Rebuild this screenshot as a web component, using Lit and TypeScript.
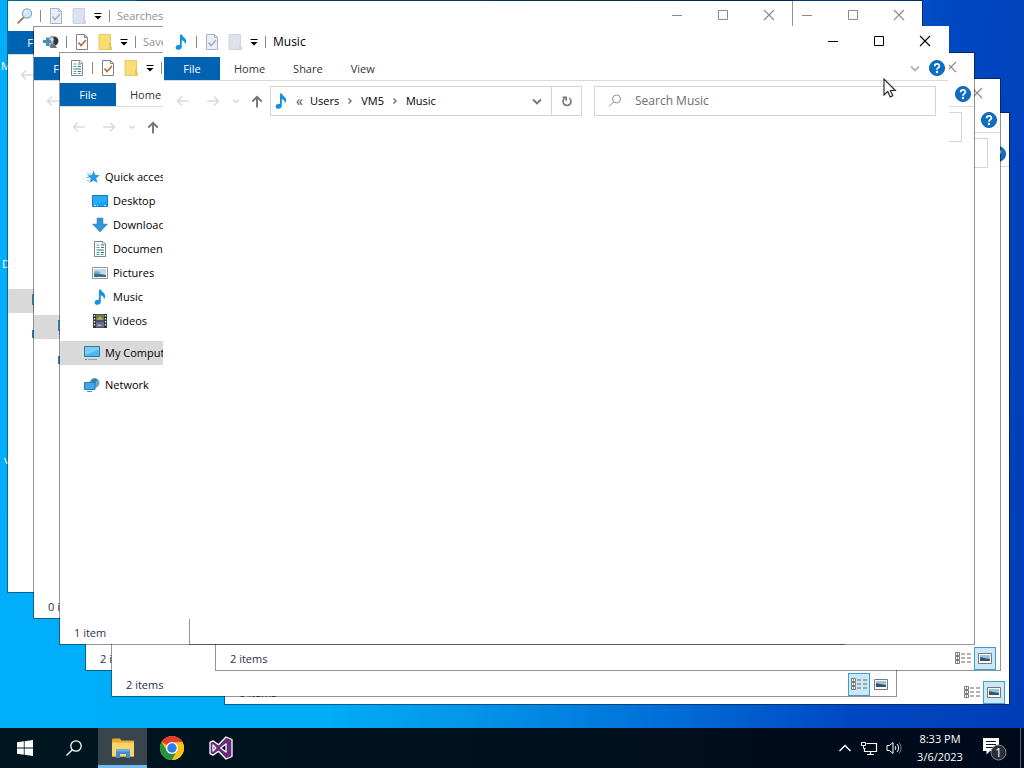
import { LitElement, html, svg, css, nothing } from "lit";
import { customElement, property } from "lit/decorators.js";
import { classMap } from "lit/directives/class-map.js";
import { styleMap } from "lit/directives/style-map.js";

interface WindowSpec {
  x: number;
  y: number;
  title?: string;
  icon: string;
  active?: boolean;
  muted?: boolean;
  tabs?: string[];
  nav?: "labels" | "icons";
  status?: string;
  view?: "details" | "large";
}

const art: Record<string, unknown> = {
  note: svg`<path d="M7 .5h1.800c.4 2.400 4.400 3.300 4.400 6.600 0 1.400-.6 2.600-1.400 3.400.4-2.600-.9-3.700-3-4.300v6.600c0 1.700-1.500 3-3.400 3-1.700 0-2.800-.9-2.800-2.300 0-1.600 1.500-2.800 3.300-2.800.4 0 .8 0 1.100.2z" fill="#1492dc"/>`,
  magnifier: svg`<path d="M7 9 1.200 14.800" stroke="#a08468" stroke-width="2" stroke-linecap="round"/><circle cx="10" cy="5.500" r="4.600" fill="#cfe9f8" stroke="#8fa9b8" stroke-width="1.200"/><path d="M7.500 5a2.600 2.600 0 0 1 2.500-2.400" stroke="#fff" fill="none"/>`,
  games: svg`<circle cx="11" cy="7" r="4.500" fill="#2f363c"/><path d="M6 3.500c2-2.500 4.500-2 4.500-2V13H6z" fill="#a7b0b7"/><path d="M0 6h3V3.500h3V6h2v3H6v3H3V9H0z" fill="#4c8dbd"/><path d="M8 10h4l2 4H7z" fill="#68747e"/><circle cx="9" cy="5.500" r="1.500" fill="#dfe6ea"/>`,
  document: svg`<path d="M2.500.5h8.500l2.500 2.500v12.500h-11z" fill="#fff" stroke="#7b8790"/><path d="M4.500 4h3m-3 2.500h3m-3 5h3m1.500 2h2.500m-7 0h3" stroke="#4c9fae"/><path d="M9 4h3M9 6.500h3M4.500 9H12M9 11.500h3" stroke="#3a6f93"/><path d="M10.500.5v3h3" fill="none" stroke="#9aa4ab"/>`,
  star: svg`<path d="m9.500 1.500 1.700 4.300 4.500.4-3.500 3 1.300 4.800-4-2.500-4 2.500 1.300-4.600-3.300-3 4.400-.5z" fill="#2d9be0"/><path d="M2.500 8.500h3M3 11.500h2.500M3 5h4" stroke="#6dbcf0"/>`,
  desktop: svg`<path d="M.5 2.500h15v11H.5z" fill="#18a0f5" stroke="#1579bd"/><path d="M2 12.500h2m1 0h1m6 0h2" stroke="#c7ebff"/><path d="M1 3h14v5L1 12z" fill="#35b3ff" opacity=".6"/>`,
  download: svg`<path d="M5 1h6v6h4.500L8 15 .5 7H5z" fill="#3394d8" stroke="#2b7fbc" stroke-width=".5"/>`,
  picture: svg`<path d="M.5 2.500h15v11H.5z" fill="#fff" stroke="#8b969e"/><path d="M2 4h12v8H2z" fill="#c0dbed"/><path d="m2 7 4 1.500L14 10v2H2z" fill="#406d8b"/><path d="M2 6.500 6 6l3 2-7 1z" fill="#7fa8c2"/>`,
  video: svg`<path d="M1 1h14v14H1z" fill="#303436"/><path d="M4 1.500h8v6H4z" fill="#6d7f50"/><path d="M4 8.500h8v6H4z" fill="#6066a8"/><path d="M5 6.500l3-3 3 3zM5 13l2-2 4 2z" fill="#c9bb52"/><path d="M2.500 2v12M13.500 2v12" stroke="#e6e6e6" stroke-width="1.400" stroke-dasharray="1.500 1.500"/>`,
  computer: svg`<path d="M.5 1.500h15v10H.5z" fill="#4cb6f1" stroke="#31789f"/><path d="M1 2h14v3L1 10z" fill="#8ad4fa" opacity=".7"/><path d="M4 14.500h9" stroke="#8aa3b1"/><path d="M1 14.500h2" stroke="#6c7e89"/>`,
  network: svg`<circle cx="10.500" cy="6" r="5" fill="#6fa9c6"/><path d="M7.500 3.500c2-2.500 5-2 6 0l-2 1.500-1 3-2-2z" fill="#417c99"/><path d="M.5 5.500h10.500v7H.5z" fill="#3fa9ea" stroke="#2679ac"/><path d="M3 14.500h5" stroke="#5791b3"/>`,
  back: svg`<path d="M14 8H3m4-4.500L2.500 8 7 12.500" fill="none" stroke="currentColor" stroke-width="1.400"/>`,
  forward: svg`<path d="M2 8h11M9 3.500 13.500 8 9 12.500" fill="none" stroke="currentColor" stroke-width="1.400"/>`,
  up: svg`<path d="M8 14.500V4M3.300 8.500 8 3.800l4.700 4.700" fill="none" stroke="currentColor" stroke-width="1.900"/>`,
  down: svg`<path d="m4 6.500 4 4 4-4" fill="none" stroke="currentColor" stroke-width="1.800"/>`,
  smalldown: svg`<path d="m5.500 7 2.500 2.500L10.500 7" fill="none" stroke="currentColor" stroke-width="1.200"/>`,
  right: svg`<path d="m6.500 5.500 2.500 2.500-2.500 2.500" fill="none" stroke="currentColor" stroke-width="1.500"/>`,
  refresh: svg`<path d="M10.300 5.200a4 4 0 1 1-4.600 0" fill="none" stroke="currentColor" stroke-width="1.600"/><path d="M3.500 4.200h3.700v3.600" fill="none" stroke="currentColor" stroke-width="1.600"/>`,
  find: svg`<circle cx="9.500" cy="6" r="4" fill="none" stroke="currentColor"/><path d="M6.500 9 2 13.500" stroke="currentColor"/>`,
  minimize: svg`<path d="M3 8.500h10" stroke="currentColor"/>`,
  maximize: svg`<path d="M3.500 3.500h9v9h-9z" fill="none" stroke="currentColor"/>`,
  close: svg`<path d="m3 3 10 10M13 3 3 13" fill="none" stroke="currentColor" stroke-width="1.100"/>`,
  help: svg`<circle cx="8" cy="8" r="7.600" fill="#0b6fc4" stroke="#0a4f93" stroke-width=".8"/><path d="M5.700 6.200c0-3 4.700-3 4.700-.3C10.400 7.700 8 7.600 8 9.700" fill="none" stroke="#fff" stroke-width="1.800"/><circle cx="8" cy="12" r="1.200" fill="#fff"/>`,
  details: svg`<path d="M.5 2.500h4v3h-4zm0 4h4v3h-4zm0 4h4v3h-4z" fill="#fff" stroke="#777"/><path d="M2 4h1M2 8h1M2 12h1" stroke="#333"/><path d="M6 4h4m2 0h4M6 8h4m2 0h4M6 12h4m2 0h4" stroke="#666"/>`,
  large: svg`<path d="M1.500 3.500h13v10h-13z" fill="#fff" stroke="#777"/><path d="M3 5h10v6H3z" fill="#9cc3dc"/><path d="m3 7 4 1 6 1v2H3z" fill="#2d5672"/>`,
  quickdown: svg`<path d="M4.500 5.500h7" stroke="currentColor" stroke-width="1"/><path d="M4.500 8h7L8 11.500z" fill="currentColor"/>`,
};

const icon = (name: string) =>
  html`<svg class="icon" viewBox="0 0 16 16" width="16" height="16" aria-hidden="true">${art[name]}</svg>`;

const checkPage = (muted: boolean) => html`<svg class="icon" viewBox="0 0 16 16" width="16" height="16" aria-hidden="true">
  <path d="M2.500.5h8l3 3v12h-11z" fill=${muted ? "#e9eef8" : "#fff"} stroke=${muted ? "#aab3c2" : "#85817f"} />
  <path d="M10.500.5v3h3" fill="none" stroke=${muted ? "#aab3c2" : "#85817f"} />
  <path d="m4.500 8.500 2.500 3 5-5.500" fill="none" stroke=${muted ? "#a3b0c6" : "#c0642f"} stroke-width="1.600" />
</svg>`;

const folder = (muted: boolean) => html`<svg class="icon" viewBox="0 0 16 16" width="16" height="16" aria-hidden="true">
  <path d="M2 .5h11.500v11l1 2v2H2z" fill=${muted ? "#dde2ef" : "#f9dc74"} stroke=${muted ? "#cdd3e2" : "#ecc95c"} />
  <path d="M13 9v6.500" stroke=${muted ? "#c3cada" : "#dcae3e"} />
</svg>`;

const shared = css`
  :host {
    box-sizing: border-box;
    font-family: "Open Sans", "Noto Sans", sans-serif;
    font-size: 11px;
    line-height: 16px;
  }
  * {
    box-sizing: border-box;
  }
  button {
    display: flex;
    align-items: center;
    justify-content: center;
    margin: 0;
    padding: 0;
    border: 0;
    background: none;
    color: inherit;
    font: inherit;
  }
  .icon {
    display: block;
    flex: none;
  }
`;

@customElement("explorer-window")
export class ExplorerWindow extends LitElement {
  @property({ attribute: false }) spec!: WindowSpec;

  static styles = [
    shared,
    css`
      :host {
        display: flex;
        flex-direction: column;
        background: #fff;
        background-clip: padding-box;
        color: #1b1b1b;
        overflow: hidden;
      }
      .title {
        display: flex;
        align-items: center;
        height: 30px;
        gap: 7px;
        padding-left: 9px;
      }
      .rule {
        width: 1px;
        height: 12px;
        background: #8b8b8b;
      }
      .quick {
        width: 8px;
        height: 16px;
        color: #000;
      }
      .quick .icon {
        margin: 0 -4px;
      }
      .name {
        flex: 1;
        font-size: 11px;
        font-weight: 400;
        margin: 0;
        color: #909090;
        white-space: nowrap;
      }
      .controls {
        display: flex;
        align-self: flex-start;
        color: #8a8a8a;
      }
      .controls button {
        width: 46px;
        height: 28px;
      }
      .active .name {
        font-size: 12px;
      }
      .active .name,
      .active .controls {
        color: #000;
      }
      .tabs {
        display: flex;
        align-items: flex-start;
        height: 24px;
        border-bottom: 1px solid #dadada;
        padding-right: 3px;
      }
      .tab {
        padding: 0 14px;
        height: 23px;
        color: #333;
      }
      .file {
        width: 56px;
        background: #0063b1;
        color: #fff;
      }
      .spacer {
        flex: 1;
      }
      .expand {
        height: 22px;
        color: #b4b4b4;
        margin-right: 6px;
      }
      .help {
        height: 22px;
      }
      .toolbar {
        display: flex;
        align-items: center;
        padding: 5px 12px 7px 4px;
      }
      .step {
        width: 30px;
        color: #dadada;
      }
      .recent {
        width: 16px;
        color: #d0d0d0;
      }
      .up {
        width: 26px;
        color: #757575;
      }
      .address {
        display: flex;
        align-items: center;
        flex: 1;
        height: 30px;
        border: 1px solid #d4d4d4;
        padding-left: 2px;
        color: #777;
      }
      .crumb {
        color: #000;
      }
      .more {
        width: 21px;
        height: 16px;
        font-size: 14px;
        color: #555;
      }
      .chevron {
        display: flex;
        justify-content: center;
        width: 22px;
      }
      .drop {
        width: 28px;
        height: 28px;
      }
      .refresh {
        width: 30px;
        height: 28px;
        border-left: 1px solid #d4d4d4;
      }
      .search {
        display: flex;
        align-items: center;
        width: 342px;
        height: 30px;
        margin-left: 12px;
        border: 1px solid #d4d4d4;
        padding-left: 12px;
        gap: 12px;
        color: #8c8c8c;
      }
      .search input {
        flex: 1;
        min-width: 0;
        border: 0;
        padding: 0;
        outline: 0;
        background: none;
        font: inherit;
        font-size: 12px;
        color: #000;
      }
      .search input::placeholder {
        color: #6d6d6d;
        opacity: 1;
      }
      .body {
        flex: 1;
      }
      .nav {
        width: 190px;
        margin: 0;
        padding: 16px 0 0;
        list-style: none;
      }
      .item {
        display: flex;
        align-items: center;
        height: 24px;
        padding-left: 24px;
        gap: 5px;
        white-space: nowrap;
        color: #000;
      }
      .child {
        padding-left: 32px;
      }
      .apart {
        margin-top: 8px;
      }
      .selected {
        background: #d9d9d9;
      }
      .status {
        display: flex;
        align-items: center;
        height: 24px;
        padding: 0 4px 0 14px;
        color: #26324d;
      }
      .count {
        padding-top: 2px;
      }
      .view {
        width: 22px;
        height: 23px;
        border: 1px solid transparent;
      }
      .view.on {
        background: #cce8f6;
        border-color: #3ba1c9;
      }
    `,
  ];

  private item(label: string, glyph: string, mods: Record<string, boolean> = {}) {
    const text = this.spec.nav === "labels" ? html`<span>${label}</span>` : nothing;
    return html`<li class=${classMap({ item: true, ...mods })}>${icon(glyph)}${text}</li>`;
  }

  render() {
    const s = this.spec;
    const muted = !!s.muted;
    return html`
      <header class=${classMap({ title: true, active: !!s.active })}>
        ${icon(s.icon)}<span class="rule"></span>${checkPage(muted)}${folder(muted)}
        <button class="quick" aria-label="Customize Quick Access Toolbar">${icon("quickdown")}</button>
        <span class="rule"></span>
        <h2 class="name">${s.title ?? ""}</h2>
        <div class="controls">
          <button aria-label="Minimize">${icon("minimize")}</button>
          <button aria-label="Maximize">${icon("maximize")}</button>
          <button aria-label="Close">${icon("close")}</button>
        </div>
      </header>
      <div class="tabs">
        ${(s.tabs ?? []).map(
          (name, i) => html`<button class=${classMap({ tab: true, file: i === 0 })}>${name}</button>`,
        )}
        <span class="spacer"></span>
        <button class="expand" aria-label="Expand the ribbon">${icon("down")}</button>
        <button class="help" aria-label="Help">${icon("help")}</button>
      </div>
      <div class="toolbar">
        <button class="step" aria-label="Back">${icon("back")}</button>
        <button class="step" aria-label="Forward">${icon("forward")}</button>
        <button class="recent" aria-label="Recent locations">${icon("smalldown")}</button>
        <button class="up" aria-label="Up">${icon("up")}</button>
        <div class="address">
          ${s.active
            ? html`${icon(s.icon)}
                <button class="more" aria-label="Earlier folders">«</button>
                <button class="crumb">Users</button>
                <span class="chevron">${icon("right")}</span>
                <button class="crumb">VM5</button>
                <span class="chevron">${icon("right")}</span>
                <button class="crumb">Music</button>`
            : nothing}
          <span class="spacer"></span>
          <button class="drop" aria-label="Previous locations">${icon("down")}</button>
          <button class="refresh" aria-label="Refresh">${icon("refresh")}</button>
        </div>
        <label class="search">
          ${icon("find")}
          <input type="text" aria-label="Search" placeholder=${s.active ? `Search ${s.title}` : ""} />
        </label>
      </div>
      <div class="body">
        ${s.nav
          ? html`<ul class="nav">
              ${this.item("Quick access", "star")}
              ${this.item("Desktop", "desktop", { child: true })}
              ${this.item("Downloads", "download", { child: true })}
              ${this.item("Documents", "document", { child: true })}
              ${this.item("Pictures", "picture", { child: true })}
              ${this.item("Music", "note", { child: true })}
              ${this.item("Videos", "video", { child: true })}
              ${this.item("My Computer", "computer", { apart: true, selected: true })}
              ${this.item("Network", "network", { apart: true })}
            </ul>`
          : nothing}
      </div>
      ${s.status
        ? html`<footer class="status">
            <span class="count">${s.status}</span>
            <span class="spacer"></span>
            ${s.view
              ? html`<button class=${classMap({ view: true, on: s.view === "details" })} aria-label="Details view">
                    ${icon("details")}
                  </button>
                  <button class=${classMap({ view: true, on: s.view === "large" })} aria-label="Large icons view">
                    ${icon("large")}
                  </button>`
              : nothing}
          </footer>`
        : nothing}
    `;
  }
}

const windows: WindowSpec[] = [
  { x: 224, y: 112, icon: "video", status: "0 items", view: "large" },
  { x: 85, y: 78, icon: "document", status: "2 items" },
  { x: 111, y: 104, icon: "star", status: "2 items", view: "details" },
  { x: 215, y: 78, icon: "picture", status: "2 items", view: "large" },
  { x: 137, y: 0, icon: "desktop" },
  { x: 7, y: 0, title: "Searches", icon: "magnifier", muted: true, tabs: ["File"], nav: "icons" },
  { x: 33, y: 26, title: "Saved Games", icon: "games", tabs: ["File"], nav: "icons", status: "0 items" },
  { x: 59, y: 52, icon: "document", tabs: ["File", "Home"], nav: "labels", status: "1 item" },
  { x: 189, y: 52, icon: "note" },
  { x: 163, y: 26, title: "Music", icon: "note", active: true, muted: true, tabs: ["File", "Home", "Share", "View"] },
];

@customElement("app-root")
export class AppRoot extends LitElement {
  static styles = [
    shared,
    css`
      :host {
        display: flex;
        flex-direction: column;
        height: 100vh;
        overflow: hidden;
        color: #fff;
      }
      .desktop {
        position: relative;
        flex: 1;
        overflow: hidden;
        background: linear-gradient(98deg, #00aefa 0%, #00adf6 38%, #0496e9 50%, #006ad6 70%, #0049c2 84%, #003cb8 100%);
      }
      .shortcut {
        position: absolute;
      }
      .window {
        position: absolute;
        width: 786px;
        height: 593px;
        border: 1px solid rgba(0, 0, 0, 0.42);
      }
      .front {
        border-color: #fff;
      }
      .pointer {
        position: absolute;
        left: 883px;
        top: 78px;
      }
      .taskbar {
        display: flex;
        align-items: stretch;
        height: 40px;
        background: linear-gradient(90deg, #001620, #00121e 45%, #000c1c 75%, #000a1c);
      }
      .apps {
        display: flex;
        flex: 1;
      }
      .app {
        width: 49px;
      }
      .running {
        background: #38454e;
        border-bottom: 3px solid #76b9ed;
        padding-top: 3px;
      }
      .tray {
        display: flex;
        align-items: center;
        gap: 8px;
      }
      .clock {
        width: 60px;
        line-height: 18px;
        text-align: center;
        white-space: nowrap;
      }
      .notices {
        width: 34px;
      }
      .peek {
        width: 4px;
        height: 40px;
        border-left: 1px solid #59636c;
      }
    `,
  ];

  render() {
    return html`
      <main class="desktop">
        <span class="shortcut" style=${styleMap({ left: "1px", top: "58px" })}>M</span>
        <span class="shortcut" style=${styleMap({ left: "2px", top: "256px" })}>D</span>
        <span class="shortcut" style=${styleMap({ left: "4px", top: "452px" })}>v</span>
        ${windows.map(
          (w) => html`<explorer-window
            class=${classMap({ window: true, front: !!w.active })}
            style=${styleMap({ left: `${w.x}px`, top: `${w.y}px` })}
            .spec=${w}
          ></explorer-window>`,
        )}
        <svg class="pointer" viewBox="0 0 14 22" width="14" height="22" aria-hidden="true">
          <path d="M1 1v16l3.800-3.500 2.400 5.500 2.600-1.200-2.400-5.300h5z" fill="#fff" stroke="#222" stroke-width="1.100" />
        </svg>
      </main>
      <nav class="taskbar" aria-label="Taskbar">
        <div class="apps">
          <button class="app" aria-label="Start">
            <svg viewBox="0 0 16 16" width="16" height="16">
              <path d="M0 2.300 6.800 1.300v6.300H0zM7.600 1.200 16 0v7.600H7.600zM0 8.400h6.800v6.300L0 13.700zM7.600 8.400H16V16l-8.400-1.200z" fill="#fff" />
            </svg>
          </button>
          <button class="app" aria-label="Search">
            <svg viewBox="0 0 16 16" width="16" height="16">
              <circle cx="10" cy="6" r="5.200" fill="none" stroke="#fff" stroke-width="1.300" />
              <path d="M6.300 9.700.5 15.500" stroke="#fff" stroke-width="1.300" />
            </svg>
          </button>
          <button class="app running" aria-label="File Explorer">
            <svg viewBox="0 0 22 20" width="22" height="20">
              <path d="M0 1.500C0 1 .5.500 1 .5h7l1.500 2H21c.6 0 1 .4 1 1v15H0z" fill="#e6ab2d" />
              <path d="M0 4.500h22v13.200c0 .5-.3.800-.8.800H.8c-.5 0-.8-.3-.8-.8z" fill="#fcd568" />
              <path d="M4 20v-7.500c0-.8.600-1.500 1.500-1.500h11c.9 0 1.500.7 1.500 1.500V20h-4v-4H8v4z" fill="#3f8fcf" />
              <path d="M4 12.500c0-.8.600-1.500 1.500-1.500h11c.9 0 1.500.7 1.500 1.500v1H4z" fill="#66b2e4" />
            </svg>
          </button>
          <button class="app" aria-label="Google Chrome">
            <svg viewBox="0 0 24 24" width="24" height="24">
              <circle cx="12" cy="12" r="12" fill="#fbc116" />
              <path d="M12 12 1.600 6A12 12 0 0 1 22.400 6z" fill="#e33b2e" />
              <path d="M1.600 6a12 12 0 0 0 10.400 18l5-9.200-5-2.800-5.200 3z" fill="#229342" />
              <path d="M12 24l5.200-9L15 6h7.400A12 12 0 0 1 12 24z" fill="#fbc116" />
              <circle cx="12" cy="12" r="6" fill="#fff" />
              <circle cx="12" cy="12" r="4.700" fill="#2f7de9" />
            </svg>
          </button>
          <button class="app" aria-label="Visual Studio">
            <svg viewBox="0 0 24 24" width="24" height="24">
              <path
                fill-rule="evenodd"
                d="M17 1 9.500 8.700 4 4.800 1 6.300v11.400l3 1.500 5.500-3.900L17 23l6-2.500v-17zM4 9l2.800 3L4 15zM17 8v8l-5.300-4z"
                fill="#682a7d"
                stroke="#fff"
                stroke-width="1.300"
                stroke-linejoin="round"
              />
            </svg>
          </button>
        </div>
        <div class="tray">
          <button aria-label="Show hidden icons">
            <svg viewBox="0 0 14 16" width="14" height="16">
              <path d="m1.500 11 5.500-5.500L12.500 11" fill="none" stroke="#fff" stroke-width="1.400" />
            </svg>
          </button>
          <button aria-label="Network">
            <svg viewBox="0 0 18 16" width="18" height="16">
              <path d="M6.500 3.500h10v8H4.500V8.500M10.500 11.500v3M7 14.500h7" fill="none" stroke="#fff" stroke-width="1.200" />
              <path d="M1.500 2.500h4v3h-4zM3.500 5.500V8.500h2" fill="none" stroke="#fff" />
            </svg>
          </button>
          <button aria-label="Volume">
            <svg viewBox="0 0 16 16" width="16" height="16">
              <path d="M1 5.500h2.500L7 2.500v11l-3.500-3H1z" fill="none" stroke="#fff" />
              <path d="M9 6c1 1 1 3 0 4M11 4c2 2.300 2 5.700 0 8" fill="none" stroke="#fff" />
              <path d="M13 2.500c2.600 3 2.600 8 0 11" fill="none" stroke="#7c8690" />
            </svg>
          </button>
          <time class="clock" datetime="2023-03-06T20:33">8:33 PM<br />3/6/2023</time>
          <button class="notices" aria-label="Notifications, 1 new">
            <svg viewBox="0 0 26 26" width="26" height="26">
              <path d="M1 3h16v13H8l-3.500 3.500V16H1z" fill="#fff" />
              <path d="M4 6.500h10M4 9.500h10M4 12.500h7" stroke="#101820" />
              <circle cx="16.500" cy="17.500" r="7.500" fill="#292f36" stroke="#838990" />
              <text x="16.500" y="22" text-anchor="middle" font-size="12" fill="#fff">1</text>
            </svg>
          </button>
          <span class="peek"></span>
        </div>
      </nav>
    `;
  }
}
